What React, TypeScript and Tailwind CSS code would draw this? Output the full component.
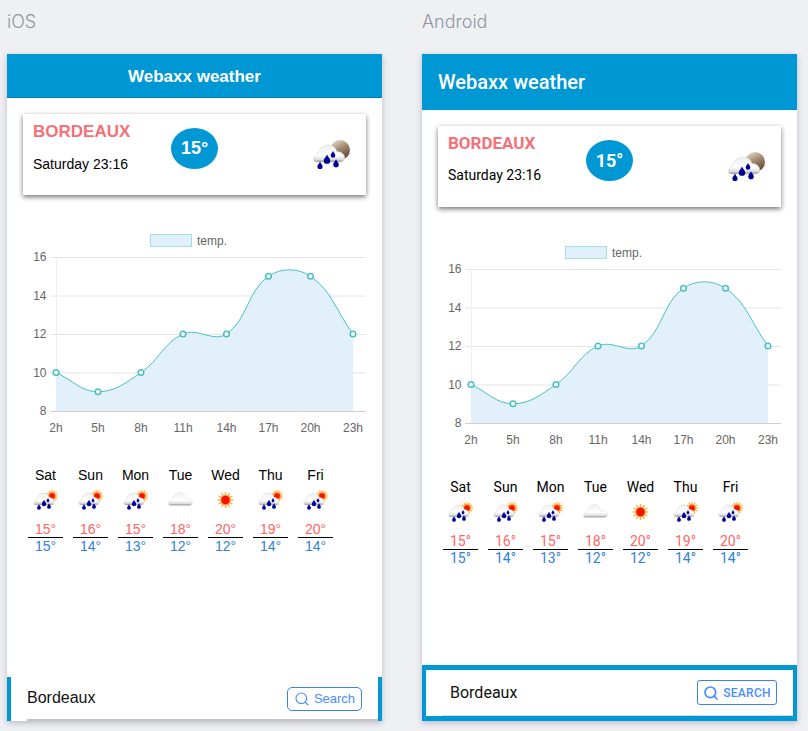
import { Search } from "lucide-react";

const HOURS = ["2h", "5h", "8h", "11h", "14h", "17h", "20h", "23h"];
const VALUES = [10, 9, 10, 12, 12, 15, 15, 12];
const XS = [33, 75, 118, 160, 203.5, 245.5, 287.5, 330];
const yOf = (v: number) => 7 + (16 - v) * 19.25;

function buildPath() {
  const pts = XS.map((x, i) => ({ x, y: yOf(VALUES[i]) }));
  const t = 0.4;
  const cps = pts.map((p, i) => {
    const a = pts[i - 1] ?? p;
    const b = pts[i + 1] ?? p;
    const d1 = Math.hypot(p.x - a.x, p.y - a.y);
    const d2 = Math.hypot(b.x - p.x, b.y - p.y);
    const s = d1 + d2 || 1;
    return {
      px: p.x - (t * d1 / s) * (b.x - a.x),
      py: p.y - (t * d1 / s) * (b.y - a.y),
      nx: p.x + (t * d2 / s) * (b.x - a.x),
      ny: p.y + (t * d2 / s) * (b.y - a.y),
    };
  });
  let d = `M${pts[0].x} ${pts[0].y}`;
  for (let i = 1; i < pts.length; i++) {
    d += ` C${cps[i - 1].nx} ${cps[i - 1].ny} ${cps[i].px} ${cps[i].py} ${pts[i].x} ${pts[i].y}`;
  }
  return d;
}
const LINE = buildPath();

function Chart() {
  const base = yOf(8);
  return (
    <svg width="343" height="190" className="block font-['Liberation_Sans',Arial,sans-serif] text-[12px]">
      {[16, 14, 12, 10, 8].map((v) => (
        <g key={v}>
          <line x1="27" x2="343" y1={yOf(v) + 0.5} y2={yOf(v) + 0.5} stroke={v === 8 ? "#cfcfcf" : "#e4e4e4"} />
          <text x="23.5" y={yOf(v) + 4} textAnchor="end" fill="#666666">{v}</text>
        </g>
      ))}
      <line x1="33.5" x2="33.5" y1={yOf(16)} y2={base} stroke="#eeeeee" />
      <path d={`${LINE} L330 ${base} L33 ${base} Z`} fill="#e1f0fb" />
      <path d={LINE} fill="none" stroke="#4bc0c0" strokeWidth="1" />
      {XS.map((x, i) => (
        <g key={x}>
          <circle cx={x} cy={yOf(VALUES[i])} r="2.8" fill="#ffffff" stroke="#4bc0c0" strokeWidth="1.5" />
          <text x={x} y="182" textAnchor="middle" fill="#666666">{HOURS[i]}</text>
        </g>
      ))}
    </svg>
  );
}

function Drop({ x, y, r = 2 }: { x: number; y: number; r?: number }) {
  return (
    <path
      d={`M${x} ${y - r * 1.7} C${x + r * 0.3} ${y - r * 0.8} ${x + r} ${y - r * 0.5} ${x + r} ${y + r * 0.2} A${r} ${r} 0 1 1 ${x - r} ${y + r * 0.2} C${x - r} ${y - r * 0.5} ${x - r * 0.3} ${y - r * 0.8} ${x} ${y - r * 1.7}Z`}
      fill="#000099"
    />
  );
}

function Sun({ x, y, r, ray }: { x: number; y: number; r: number; ray: number }) {
  const rays = Array.from({ length: 12 }, (_, i) => (i * Math.PI) / 6);
  return (
    <g>
      {rays.map((a) => (
        <line
          key={a}
          x1={x + Math.cos(a) * r}
          y1={y + Math.sin(a) * r}
          x2={x + Math.cos(a) * ray}
          y2={y + Math.sin(a) * ray}
          stroke="#ffb040"
          strokeWidth="1.3"
        />
      ))}
      <circle cx={x} cy={y} r={r + 1} fill="#ff9a20" />
      <circle cx={x} cy={y} r={r} fill="#f51000" />
    </g>
  );
}

const CLOUD = "M3 15 C0 15 0 10.5 3.5 10 C3.5 6 7 3 10.5 3 C13.5 3 15.5 5 16 7.5 C19 7.5 21.5 10 21 12.5 C21 14.5 19.5 15 18 15 Z";

function Gradient({ id }: { id: string }) {
  return (
    <defs>
      <linearGradient id={id} x1="0" y1="0" x2="0" y2="1">
        <stop offset="0" stopColor="#efefef" />
        <stop offset="0.6" stopColor="#ffffff" />
        <stop offset="0.85" stopColor="#dcdcdc" />
        <stop offset="1" stopColor="#8a8a8a" />
      </linearGradient>
    </defs>
  );
}

function RainSun() {
  return (
    <svg width="25" height="20" viewBox="0 0 25 20" className="block overflow-visible">
      <Gradient id="cg1" />
      <Sun x={19} y={6} r={2.8} ray={6} />
      <path d={CLOUD} fill="url(#cg1)" stroke="#d8d8d8" strokeWidth="0.5" />
      <Drop x={6} y={17.5} r={1.9} />
      <Drop x={11} y={13.5} r={2.2} />
      <Drop x={16} y={16.5} r={1.9} />
      <Drop x={15} y={10.5} r={1.4} />
    </svg>
  );
}

function CloudOnly() {
  return (
    <svg width="25" height="20" viewBox="0 0 25 20" className="block overflow-visible">
      <Gradient id="cg2" />
      <path d="M3 15.5 C-0.5 15.5 -0.5 10.5 4 10 C5 6 8 2.5 12 2.5 C15 2.5 17 5 17.5 8.5 C20 8 24.5 9.5 24.5 12.5 C24.5 14.5 23 15.5 21 15.5 Z" fill="url(#cg2)" stroke="#dddddd" strokeWidth="0.5" />
    </svg>
  );
}

function SunOnly() {
  return (
    <svg width="25" height="20" viewBox="0 0 25 20" className="block overflow-visible">
      <Sun x={12.5} y={10} r={4.2} ray={8} />
    </svg>
  );
}

function MoonRain() {
  return (
    <svg width="40" height="32" viewBox="0 0 40 32" className="block overflow-visible">
      <defs>
        <linearGradient id="mg" x1="0.2" y1="0" x2="0.7" y2="1">
          <stop offset="0" stopColor="#e8dccf" />
          <stop offset="0.45" stopColor="#a58a70" />
          <stop offset="1" stopColor="#5f4530" />
        </linearGradient>
      </defs>
      <Gradient id="cg3" />
      <circle cx="28" cy="10" r="10" fill="url(#mg)" />
      <g transform="translate(0 1) scale(1.55 1.4)">
        <path d={CLOUD} fill="url(#cg3)" stroke="#d8d8d8" strokeWidth="0.4" />
      </g>
      <Drop x={8} y={26} r={2.6} />
      <Drop x={15} y={20} r={3.2} />
      <Drop x={21} y={15} r={2.3} />
      <Drop x={24} y={24} r={2.8} />
    </svg>
  );
}

const DAYS = [
  { d: "Sat", hi: 15, lo: 15, icon: "r" },
  { d: "Sun", hi: 16, lo: 14, icon: "r" },
  { d: "Mon", hi: 15, lo: 13, icon: "r" },
  { d: "Tue", hi: 18, lo: 12, icon: "c" },
  { d: "Wed", hi: 20, lo: 12, icon: "s" },
  { d: "Thu", hi: 19, lo: 14, icon: "r" },
  { d: "Fri", hi: 20, lo: 14, icon: "r" },
];

function Phone({ android }: { android?: boolean }) {
  const font = android ? "font-['Roboto',sans-serif]" : "font-['Liberation_Sans',Arial,sans-serif]";
  return (
    <div className={`flex h-[667px] w-[375px] flex-col bg-white shadow-[0_2px_6px_rgba(60,65,90,0.3)] ${font}`}>
      {android ? (
        <div className="flex h-14 items-center bg-[#0098d4] pl-4 text-[20px] font-medium text-white">Webaxx weather</div>
      ) : (
        <div className="flex h-11 items-center justify-center border-b border-[#0079a9] bg-[#0098d4] pt-[2px] text-[17px] font-bold text-white">Webaxx weather</div>
      )}
      <div className="mx-4 mt-4 flex h-[81px] items-start bg-white pl-[10px] shadow-[0_2px_5px_rgba(0,0,0,0.55)]">
        <div className="w-[138px]">
          <div className={`text-[#f4717a] ${android ? "mt-[7px] text-[17px] font-bold leading-[20px]" : "mt-[8px] text-[17px] font-bold leading-[20px]"}`}>BORDEAUX</div>
          <div className="mt-[12px] text-[14px] leading-[20px] text-black">Saturday 23:16</div>
        </div>
        <div className="mt-[14px] flex h-[41px] w-[47px] items-center justify-center rounded-[50%] bg-[#0098d4] text-[18px] font-bold text-white">15°</div>
        <div className="ml-auto mr-[14px] mt-[26px]">
          <MoonRain />
        </div>
      </div>
      <div className="mx-4">
        <div className="mt-[39px] flex h-[13px] items-center pl-[127px] font-['Liberation_Sans',Arial,sans-serif] text-[12px] text-[#666666]">
          <div className="h-[13px] w-[42px] border border-[#a5e0e0] bg-[#e1f0fb]" />
          <span className="ml-[5px]">temp.</span>
        </div>
        <div className="mt-[3px]">
          <Chart />
        </div>
      </div>
      <div className="ml-[21px] mt-[25px] flex gap-[10px]">
        {DAYS.map((x) => (
          <div key={x.d} className="flex w-[35px] flex-col items-center text-[14px]">
            <div className="h-5 leading-5 text-black">{x.d}</div>
            <div className="mt-[5px] h-5">
              {x.icon === "r" ? <RainSun /> : x.icon === "c" ? <CloudOnly /> : <SunOnly />}
            </div>
            <div className="mt-[11px] w-full border-b border-black text-center leading-[16px] text-[#ff6666]">{x.hi}°</div>
            <div className="w-full text-center leading-[17px] text-[#3080dd]">{x.lo}°</div>
          </div>
        ))}
      </div>
      <div className="flex-1" />
      {android ? (
        <div className="h-14 border-[5px] border-[#0098d4] border-x-4 bg-white">
          <div className="ml-4 flex h-full items-center border-b border-[#d5d5dd] pl-2 pr-4 text-[16px] text-[#111111]">
            <span>Bordeaux</span>
            <button className="ml-auto flex h-[25px] w-20 items-center justify-center gap-[4px] rounded-[3px] border border-[#3880ff] text-[12px] font-medium tracking-[0.3px] text-[#4a8dff]">
              <Search size={16} strokeWidth={2.6} />
              SEARCH
            </button>
          </div>
        </div>
      ) : (
        <div className="h-11 border-x-4 border-[#0098d4] bg-white">
          <div className="ml-4 flex h-full items-center border-b-2 border-[#c4c4c4] pr-4 text-[16px] text-[#111111]">
            <span>Bordeaux</span>
            <button className="ml-auto mt-[1px] flex h-6 w-[75px] items-center justify-center gap-[4px] rounded-[5px] border border-[#3880ff] text-[13px] text-[#4a8dff]">
              <Search size={16} strokeWidth={1.7} />
              Search
            </button>
          </div>
        </div>
      )}
    </div>
  );
}

export default function App() {
  return (
    <div className="flex h-[731px] w-[808px] gap-10 overflow-hidden bg-[#eff0f4] pl-[7px] font-['Inter',sans-serif]">
      <div>
        <div className="flex h-[54px] items-start pt-[10px] text-[18px] font-light leading-6 text-[#92959f]">iOS</div>
        <Phone />
      </div>
      <div>
        <div className="flex h-[54px] items-start pt-[10px] text-[18px] font-light leading-6 text-[#92959f]">Android</div>
        <Phone android />
      </div>
    </div>
  );
}
